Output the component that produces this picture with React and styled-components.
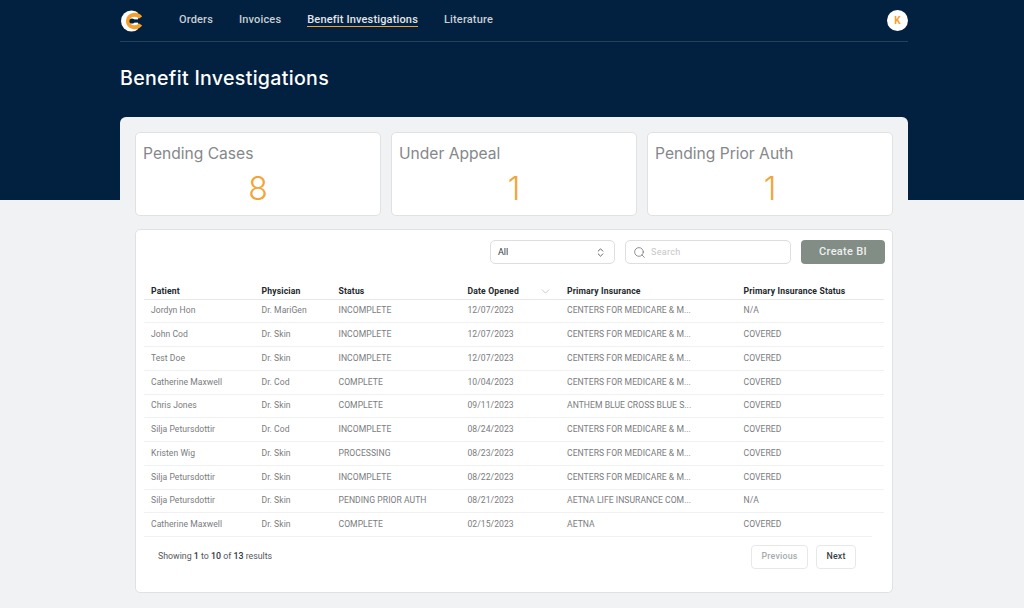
import React from 'react'
import styled, { createGlobalStyle } from 'styled-components'
import { ChevronDown, ChevronsUpDown, Search } from 'lucide-react'

const GlobalStyle = createGlobalStyle`
  html, body { margin: 0; padding: 0; }
  body { font-family: "Roboto", "Liberation Sans", sans-serif; }
`

const Page = styled.div`
  width: 1024px;
  height: 608px;
  overflow: hidden;
  background: linear-gradient(#02203f 0, #02203f 200px, #f1f2f4 200px);
`
const Wrap = styled.div`
  width: 788px;
  margin-left: 120px;
`
const Nav = styled.nav`
  height: 42px;
  box-sizing: border-box;
  display: flex;
  align-items: center;
  border-bottom: 1px solid #24405b;
  padding-left: 1px;
`
const NavLinks = styled.div`
  display: flex;
  gap: 26px;
  margin-left: 36px;
  flex: 1;
  padding-bottom: 1px;
`
const NavLink = styled.a`
  color: ${p => (p.$active ? '#e3e7ea' : '#c9cfd5')};
  font-size: 11px;
  font-weight: 500;
  letter-spacing: 0.16px;
  line-height: 13px;
  border-bottom: 1px solid ${p => (p.$active ? '#f5a02c' : 'transparent')};
`
const Avatar = styled.div`
  width: 21px;
  height: 21px;
  border-radius: 50%;
  background: #fff;
  color: #f5a02c;
  font-size: 10px;
  font-weight: 700;
  display: flex;
  align-items: center;
  justify-content: center;
`
const Title = styled.h1`
  margin: 24px 0 0 0;
  height: 51px;
  color: #fff;
  font-family: "Inter", sans-serif;
  font-size: 19.6px;
  font-weight: 500;
  line-height: 24px;
  letter-spacing: 0.3px;
`
const Panel = styled.div`
  background: #f1f2f4;
  border-radius: 6px 6px 0 0;
  padding: 15px 15px 0;
  height: 491px;
  box-sizing: border-box;
`
const Stats = styled.div`
  display: grid;
  grid-template-columns: repeat(3, 246px);
  gap: 10px;
`
const StatCard = styled.div`
  height: 84px;
  box-sizing: border-box;
  background: #fff;
  border: 1px solid #dfe1e3;
  border-radius: 5px;
  padding: 11px 7px;
`
const StatLabel = styled.div`
  color: #85888b;
  font-family: "Inter", sans-serif;
  font-size: 15.6px;
  line-height: 20px;
`
const StatValue = styled.div`
  color: #f5a333;
  font-family: "Inter", sans-serif;
  font-size: 32px;
  font-weight: 300;
  line-height: 36px;
  margin-top: 7px;
  text-align: center;
`
const TableCard = styled.div`
  margin-top: 13px;
  height: 364px;
  box-sizing: border-box;
  background: #fff;
  border: 1px solid #dfe1e3;
  border-radius: 5px;
  padding: 10px 8px 0;
`
const Toolbar = styled.div`
  display: flex;
  justify-content: flex-end;
  gap: 10px;
  height: 24px;
  margin-right: -1px;
`
const Select = styled.div`
  width: 125px;
  box-sizing: border-box;
  border: 1px solid #dcdedf;
  border-radius: 5px;
  display: flex;
  align-items: center;
  justify-content: space-between;
  padding: 0 8px 0 7px;
  color: #33383d;
  font-size: 9px;
`
const SearchBox = styled.div`
  width: 166px;
  box-sizing: border-box;
  border: 1px solid #dcdedf;
  border-radius: 5px;
  display: flex;
  align-items: center;
  gap: 5px;
  padding: 0 7px;
  color: #c3c6c9;
  font-size: 9px;
  letter-spacing: 0.3px;
`
const CreateButton = styled.button`
  width: 84px;
  border: none;
  border-radius: 4px;
  background: #828d86;
  color: #eef0ee;
  font-family: inherit;
  font-size: 11px;
  font-weight: 500;
  letter-spacing: 0.3px;
  padding: 0 0 2px;
`
const Table = styled.div`
  margin-top: 19.5px;
`
const Row = styled.div`
  display: grid;
  grid-template-columns: 110.5px 77px 129px 99.5px 176.5px 1fr;
  align-items: center;
  box-sizing: border-box;
  padding-left: 7px;
  height: ${p => (p.$head ? '16px' : '23.75px')};
  border-bottom: 1px solid ${p => (p.$head ? '#e6e8e9' : '#f0f1f2')};
  margin-right: ${p => (p.$last ? '12px' : '0')};
`
const HeadCell = styled.div`
  display: flex;
  justify-content: space-between;
  align-items: center;
  padding-right: 15px;
  color: #22272c;
  font-size: 8.6px;
  font-weight: 700;
  line-height: 12px;
  white-space: nowrap;
  letter-spacing: 0.17px;
`
const Cell = styled.div`
  color: #7a7c7e;
  font-size: 8.6px;
  letter-spacing: 0.04px;
  white-space: nowrap;
  padding-bottom: 1px;
`
const Footer = styled.div`
  display: flex;
  align-items: center;
  justify-content: space-between;
  padding: 7.5px 28px 0 14px;
`
const Results = styled.div`
  color: #54585c;
  font-size: 8.8px;
  padding-bottom: 1px;
  b { font-weight: 500; color: #33383d; }
`
const Pager = styled.div`
  display: flex;
  gap: 8px;
`
const PageButton = styled.button`
  height: 24px;
  width: ${p => p.$w}px;
  background: #fff;
  border: 1px solid #e6e8e9;
  border-radius: 4px;
  color: ${p => (p.disabled ? '#a6abaf' : '#3a3f44')};
  font-family: inherit;
  font-size: 8.8px;
  font-weight: 500;
  letter-spacing: 0.2px;
  padding: 0 0 2px;
`

const Logo = () => (
  <svg width="22" height="22" viewBox="0 0 22 22">
    <circle cx="10.5" cy="11" r="10.5" fill="#fff" />
    <path d="M17 0 H22 V22 H17 Z" fill="#02203f" />
    <path d="M19.5 7.6 C17.5 4.7 14 4.6 12 4.9 A6.2 6.2 0 0 0 12 17.1 C14 17.4 17.5 17.3 19.5 14.4" fill="none" stroke="#f5a02c" strokeWidth="4" />
    <circle cx="11" cy="11" r="2.6" fill="#02203f" />
    <path d="M11 9.4 H22 V12.6 H11 Z" fill="#02203f" />
  </svg>
)

const rows = [
  ['Jordyn Hon', 'Dr. MariGen', 'INCOMPLETE', '12/07/2023', 'CENTERS FOR MEDICARE & M...', 'N/A'],
  ['John Cod', 'Dr. Skin', 'INCOMPLETE', '12/07/2023', 'CENTERS FOR MEDICARE & M...', 'COVERED'],
  ['Test Doe', 'Dr. Skin', 'INCOMPLETE', '12/07/2023', 'CENTERS FOR MEDICARE & M...', 'COVERED'],
  ['Catherine Maxwell', 'Dr. Cod', 'COMPLETE', '10/04/2023', 'CENTERS FOR MEDICARE & M...', 'COVERED'],
  ['Chris Jones', 'Dr. Skin', 'COMPLETE', '09/11/2023', 'ANTHEM BLUE CROSS BLUE S...', 'COVERED'],
  ['Silja Petursdottir', 'Dr. Cod', 'INCOMPLETE', '08/24/2023', 'CENTERS FOR MEDICARE & M...', 'COVERED'],
  ['Kristen Wig', 'Dr. Skin', 'PROCESSING', '08/23/2023', 'CENTERS FOR MEDICARE & M...', 'COVERED'],
  ['Silja Petursdottir', 'Dr. Skin', 'INCOMPLETE', '08/22/2023', 'CENTERS FOR MEDICARE & M...', 'COVERED'],
  ['Silja Petursdottir', 'Dr. Skin', 'PENDING PRIOR AUTH', '08/21/2023', 'AETNA LIFE INSURANCE COM...', 'N/A'],
  ['Catherine Maxwell', 'Dr. Skin', 'COMPLETE', '02/15/2023', 'AETNA', 'COVERED'],
]

const stats = [
  { label: 'Pending Cases', value: 8 },
  { label: 'Under Appeal', value: 1 },
  { label: 'Pending Prior Auth', value: 1 },
]

export default function App() {
  return (
    <Page>
      <GlobalStyle />
      <Wrap>
        <Nav>
          <Logo />
          <NavLinks>
            <NavLink>Orders</NavLink>
            <NavLink>Invoices</NavLink>
            <NavLink $active>Benefit Investigations</NavLink>
            <NavLink>Literature</NavLink>
          </NavLinks>
          <Avatar>K</Avatar>
        </Nav>
        <Title>Benefit Investigations</Title>
        <Panel>
          <Stats>
            {stats.map(s => (
              <StatCard key={s.label}>
                <StatLabel>{s.label}</StatLabel>
                <StatValue>{s.value}</StatValue>
              </StatCard>
            ))}
          </Stats>
          <TableCard>
            <Toolbar>
              <Select>
                All
                <ChevronsUpDown size={11} color="#555" />
              </Select>
              <SearchBox>
                <Search size={13} color="#777" strokeWidth={1.5} />
                Search
              </SearchBox>
              <CreateButton>Create BI</CreateButton>
            </Toolbar>
            <Table>
              <Row $head>
                <HeadCell>Patient</HeadCell>
                <HeadCell>Physician</HeadCell>
                <HeadCell>Status</HeadCell>
                <HeadCell>
                  Date Opened
                  <ChevronDown size={13} color="#a9adb0" strokeWidth={1.2} />
                </HeadCell>
                <HeadCell>Primary Insurance</HeadCell>
                <HeadCell>Primary Insurance Status</HeadCell>
              </Row>
              {rows.map((r, i) => (
                <Row key={i} $last={i === rows.length - 1}>
                  {r.map((c, j) => (
                    <Cell key={j}>{c}</Cell>
                  ))}
                </Row>
              ))}
            </Table>
            <Footer>
              <Results>
                Showing <b>1</b> to <b>10</b> of <b>13</b> results
              </Results>
              <Pager>
                <PageButton $w={57} disabled>Previous</PageButton>
                <PageButton $w={40}>Next</PageButton>
              </Pager>
            </Footer>
          </TableCard>
        </Panel>
      </Wrap>
    </Page>
  )
}
